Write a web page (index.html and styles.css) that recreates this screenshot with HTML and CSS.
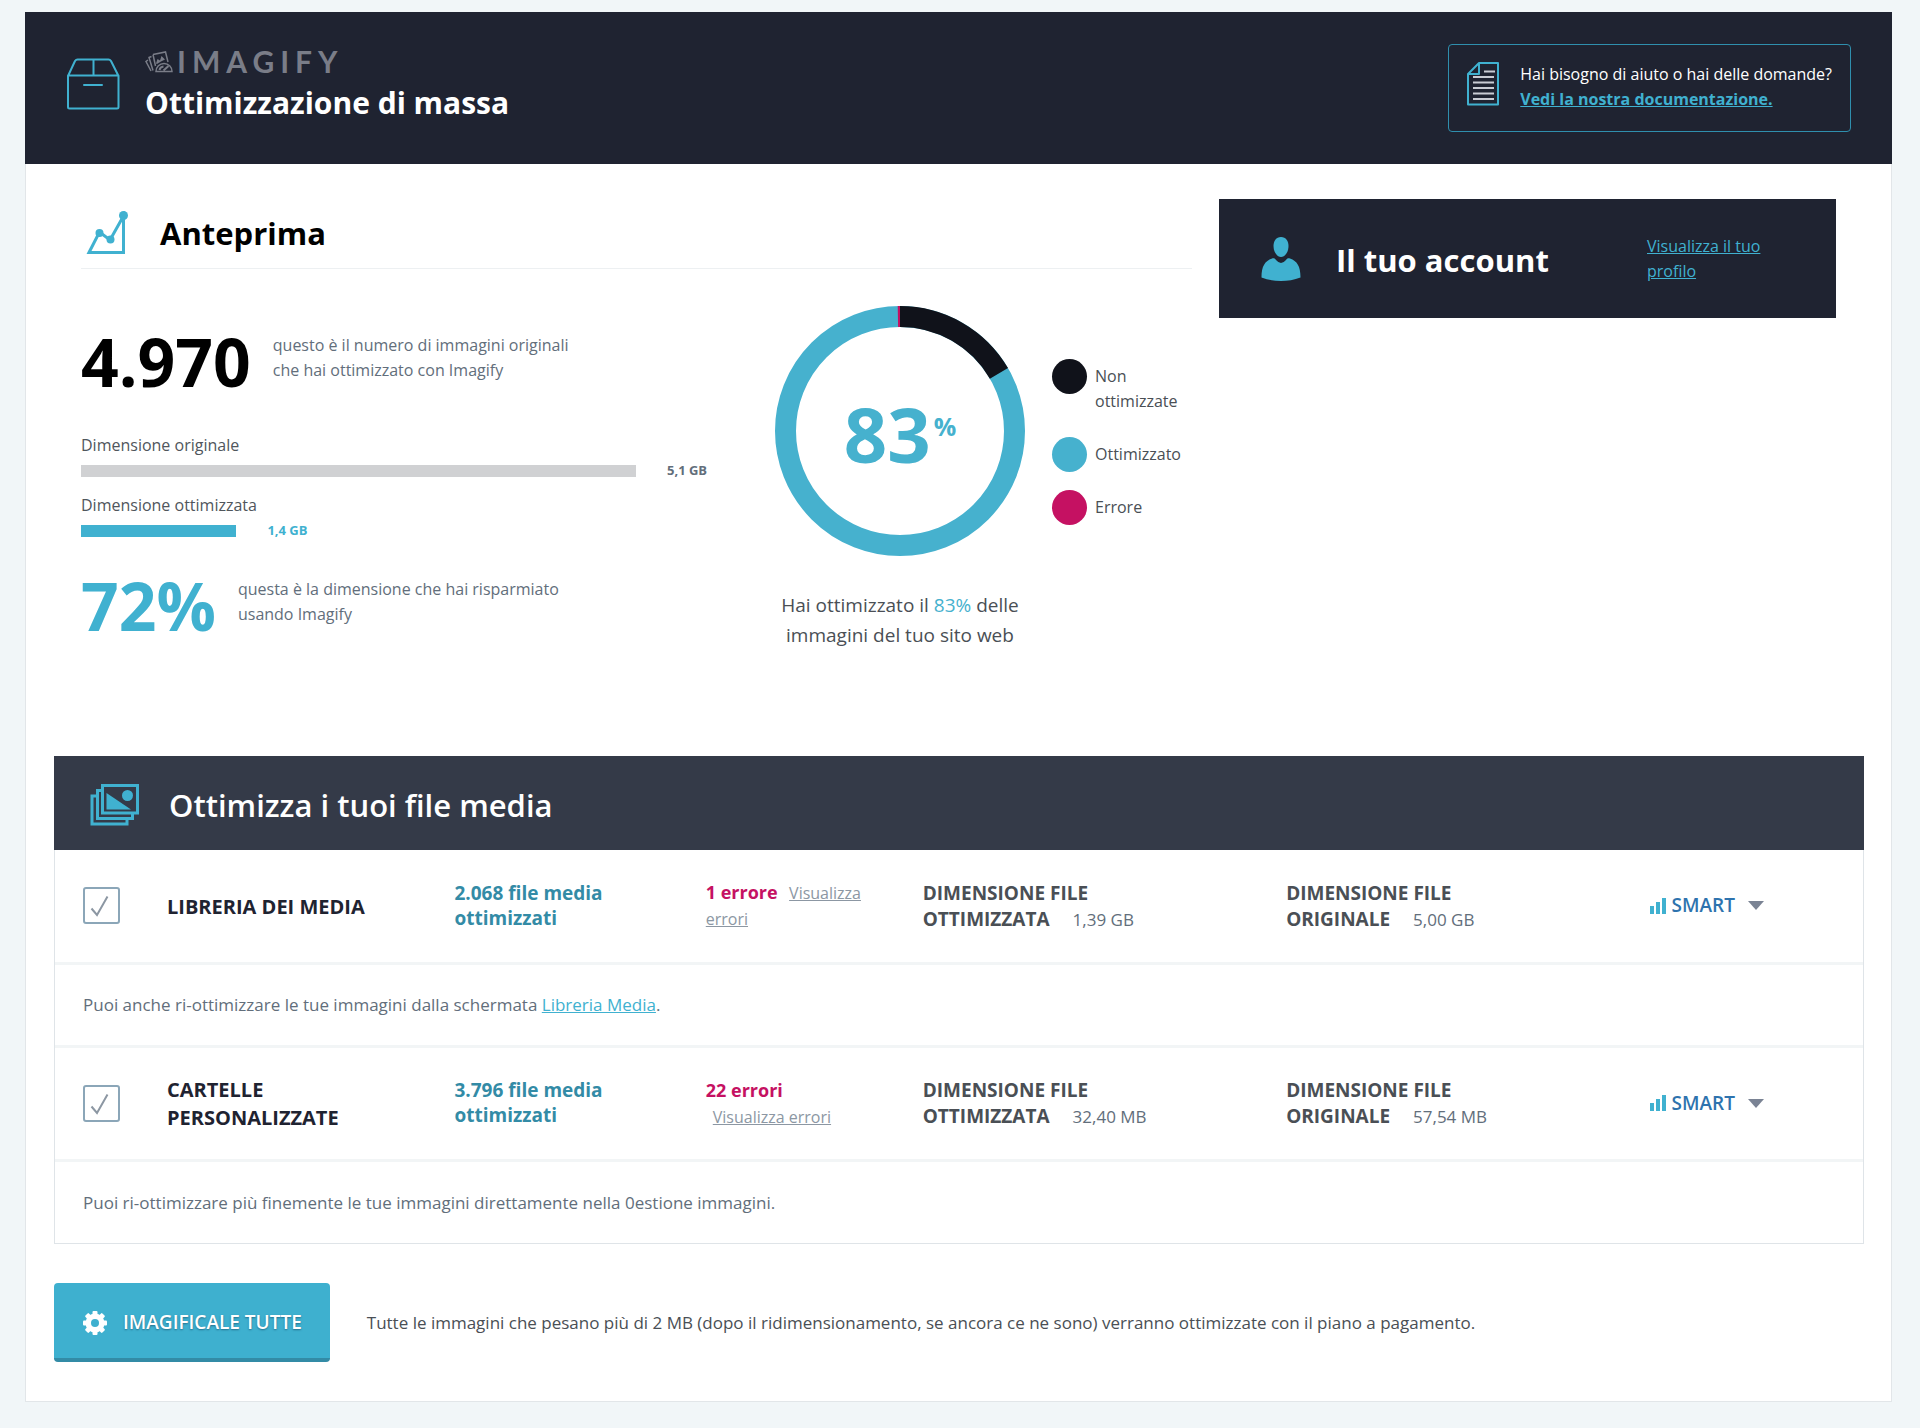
FILE: index.html
```html
<!DOCTYPE html>
<html lang="it">
<head>
<meta charset="utf-8">
<meta name="viewport" content="width=device-width, initial-scale=1">
<title>Imagify - Ottimizzazione di massa</title>
<link rel="stylesheet" href="styles.css">
</head>
<body>
<div class="page">
  <header class="top">
    <svg class="top-icon" width="54" height="52" viewBox="0 0 54 52" fill="none" stroke="#40b1d0" stroke-width="2" stroke-linejoin="round" stroke-linecap="round" aria-hidden="true">
      <path d="M2 18 L9 3 Q10 1.500 11.500 1.500 H42.500 Q44 1.500 45 3 L52.500 18 V49 Q52.500 50.500 51 50.500 H3.500 Q2 50.500 2 49 Z M2 17.500 H52.500 M27.500 2 V17 M18 27 H36"/>
    </svg>
    <div class="top-title">
      <div class="logo">
        <svg width="28" height="22" viewBox="0 0 28 22" fill="none" stroke="#7a7d88" aria-hidden="true">
          <path d="M8 3.500 L20.500 1 L23 11 M8 3.500 L10.500 15 M6.500 5.500 L4 6.500 L8 19.500 M3 9 L1 10.500 L6 20" stroke-width="1.500"/>
          <path d="M11 12.500 L12.500 8 L15 9.500 L16.500 5 L20 8.500 L16 10.500 L12 13 Z" fill="#7a7d88" stroke="none"/>
          <path d="M11 20.500 A8 8 0 0 1 27 20.500 Z" stroke-width="1.500"/>
          <path d="M14.500 19 A4.500 4.500 0 0 1 18.500 15.500 M18.500 19.500 L23.500 15" stroke-width="2"/>
        </svg>
        <span>IMAGIFY</span>
      </div>
      <h1>Ottimizzazione di massa</h1>
    </div>
    <aside class="help">
      <svg width="32" height="44" viewBox="0 0 32 44" fill="none" aria-hidden="true">
        <path d="M12 1 H31 V42.500 H1 V12 Z M12 1 V12 H1" stroke="#40b1d0" stroke-width="2" stroke-linejoin="round"/>
        <path d="M17 9.500 H28 M6 15 H27 M6 20.500 H27 M6 26 H27 M6 31.500 H27 M6 37 H27" stroke="#c9ccd4" stroke-width="2"/>
      </svg>
      <p>Hai bisogno di aiuto o hai delle domande?<br><a href="#documentazione">Vedi la nostra documentazione.</a></p>
    </aside>
  </header>

  <div class="summary">
    <section class="overview">
      <div class="overview-head">
        <svg width="44" height="44" viewBox="0 0 44 44" fill="none" stroke="#40b1d0" stroke-width="3" aria-hidden="true">
          <path d="M4 41.500 L14.500 21 L25 29 L38.500 5 V41.500 Z"/>
          <g fill="#40b1d0" stroke="none"><circle cx="38.500" cy="4.500" r="4.500"/><circle cx="14.500" cy="22" r="4"/><circle cx="25.500" cy="28.500" r="4"/></g>
        </svg>
        <h2>Anteprima</h2>
      </div>
      <div class="overview-body">
        <div class="numbers">
          <div class="figure">
            <strong>4.970</strong>
            <p>questo è il numero di immagini originali<br>che hai ottimizzato con Imagify</p>
          </div>
          <div class="sizes">
            <p>Dimensione originale</p>
            <div class="track"><div class="bar" style="width:100%"></div><b>5,1 GB</b></div>
            <p>Dimensione ottimizzata</p>
            <div class="track optimized"><div class="bar" style="width:28%"></div><b>1,4 GB</b></div>
          </div>
          <div class="figure saved">
            <strong>72%</strong>
            <p>questa è la dimensione che hai risparmiato<br>usando Imagify</p>
          </div>
        </div>
        <div class="chart">
          <div class="donut">
            <svg viewBox="0 0 250 250" fill="none" stroke-width="21" aria-hidden="true">
              <g transform="rotate(-90 125 125)">
                <circle cx="125" cy="125" r="114.500" stroke="#46b1ce"/>
                <circle cx="125" cy="125" r="114.500" stroke="#10121a" pathLength="1000" stroke-dasharray="166 834"/>
                <circle cx="125" cy="125" r="114.500" stroke="#c51162" pathLength="1000" stroke-dasharray="3 997" stroke-dashoffset="3"/>
              </g>
            </svg>
            <div class="donut-value">83<span>%</span></div>
          </div>
          <ul class="legend">
            <li><i class="dot dark"></i><span>Non ottimizzate</span></li>
            <li><i class="dot"></i><span>Ottimizzato</span></li>
            <li><i class="dot error"></i><span>Errore</span></li>
          </ul>
          <p class="caption">Hai ottimizzato il <span>83%</span> delle<br>immagini del tuo sito web</p>
        </div>
      </div>
    </section>
    <section class="account">
      <svg width="42" height="44" viewBox="0 0 42 44" fill="#40b1d0" aria-hidden="true">
        <path d="M21 0 C26 0 28.500 4 28.500 9 C28.500 15 25 20 21 20 C17 20 13.500 15 13.500 9 C13.500 4 16 0 21 0 Z"/>
        <path d="M12 21.500 C14 21 15 21.500 16 23 Q18.500 26 21 26 Q23.500 26 26 23 C27 21.500 28 21 30 21.500 C37 24 40.500 29 40.500 40.500 Q31 44 21 44 Q11 44 1.500 40.500 C1.500 29 5 24 12 21.500 Z"/>
      </svg>
      <h2>Il tuo account</h2>
      <a href="#profilo">Visualizza il tuo profilo</a>
    </section>
  </div>

  <section class="media">
    <div class="media-head">
      <svg width="50" height="42" viewBox="0 0 50 42" fill="none" stroke="#40b1d0" stroke-width="3" aria-hidden="true">
        <path d="M12.500 1.500 H47.500 V29 H12.500 Z M12 6.500 H7.500 V34.500 H42.500 V30 M7 12 H2 V40 H37 V35"/>
        <g fill="#40b1d0" stroke="none"><path d="M16.500 9 L41 25.500 H16.500 Z"/><circle cx="37.500" cy="11.500" r="5.500"/></g>
      </svg>
      <h2>Ottimizza i tuoi file media</h2>
    </div>
    <table>
      <colgroup><col class="c-check"><col class="c-name"><col class="c-count"><col class="c-errors"><col class="c-size"><col class="c-size"><col></colgroup>
      <tbody>
        <tr>
          <td><input type="checkbox" id="library" checked></td>
          <th scope="row"><label for="library">LIBRERIA DEI MEDIA</label></th>
          <td class="count">2.068 file media<br>ottimizzati</td>
          <td class="errors"><b>1 errore</b> <a href="#errori-libreria">Visualizza errori</a></td>
          <td class="size"><b>DIMENSIONE FILE<br>OTTIMIZZATA</b><span>1,39 GB</span></td>
          <td class="size"><b>DIMENSIONE FILE<br>ORIGINALE</b><span>5,00 GB</span></td>
          <td><div class="level">
            <svg width="16" height="16" viewBox="0 0 16 16" fill="#40b1d0" aria-hidden="true"><path d="M0 8 H4 V16 H0 Z M6 4 H10 V16 H6 Z M12 0 H16 V16 H12 Z"/></svg>
            <select aria-label="Livello"><option>SMART</option></select>
            <svg width="16" height="9" viewBox="0 0 16 9" fill="#7a8394" aria-hidden="true"><path d="M0 0 H16 L8 9 Z"/></svg>
          </div></td>
        </tr>
        <tr class="note"><td colspan="7">Puoi anche ri-ottimizzare le tue immagini dalla schermata <a href="#libreria">Libreria Media</a>.</td></tr>
        <tr>
          <td><input type="checkbox" id="folders" checked></td>
          <th scope="row"><label for="folders">CARTELLE<br>PERSONALIZZATE</label></th>
          <td class="count">3.796 file media<br>ottimizzati</td>
          <td class="errors"><b>22 errori</b><br><a class="indent" href="#errori-cartelle">Visualizza errori</a></td>
          <td class="size"><b>DIMENSIONE FILE<br>OTTIMIZZATA</b><span>32,40 MB</span></td>
          <td class="size"><b>DIMENSIONE FILE<br>ORIGINALE</b><span>57,54 MB</span></td>
          <td><div class="level">
            <svg width="16" height="16" viewBox="0 0 16 16" fill="#40b1d0" aria-hidden="true"><path d="M0 8 H4 V16 H0 Z M6 4 H10 V16 H6 Z M12 0 H16 V16 H12 Z"/></svg>
            <select aria-label="Livello"><option>SMART</option></select>
            <svg width="16" height="9" viewBox="0 0 16 9" fill="#7a8394" aria-hidden="true"><path d="M0 0 H16 L8 9 Z"/></svg>
          </div></td>
        </tr>
        <tr class="note"><td colspan="7">Puoi ri-ottimizzare più finemente le tue immagini direttamente nella 0estione immagini.</td></tr>
      </tbody>
    </table>
  </section>

  <footer class="actions">
    <button type="button">
      <svg width="26" height="26" viewBox="0 0 26 26" aria-hidden="true">
        <g fill="#fff"><circle cx="13" cy="13" r="9.500"/>
          <g id="teeth"><rect x="10.500" y="1" width="5" height="24" rx="1"/><rect x="1" y="10.500" width="24" height="5" rx="1"/></g>
          <use href="#teeth" transform="rotate(45 13 13)"/></g>
        <circle cx="13" cy="13" r="4" fill="#3eb0cf"/>
      </svg>
      IMAGIFICALE TUTTE
    </button>
    <p>Tutte le immagini che pesano più di 2 MB (dopo il ridimensionamento, se ancora ce ne sono) verranno ottimizzate con il piano a pagamento.</p>
  </footer>
</div>
</body>
</html>
```

FILE: styles.css
```css
* { box-sizing: border-box; }

body {
  margin: 0;
  padding: 12px 28px 27px 25px;
  background: #f1f6f8;
  color: #4a4f55;
  font: 16px/25px "Open Sans", "Noto Sans", sans-serif;
}

h1, h2, p, ul { margin: 0; padding: 0; font-weight: 700; }
p { font-weight: 400; }
svg { display: block; flex: none; }
a { color: #40b1d0; }

.page {
  background: #fff;
  border: 1px solid #e2e6e9;
  border-top: 0;
  padding-bottom: 39px;
}

/* Header */
.top {
  display: flex;
  align-items: flex-start;
  margin: 0 -1px;
  padding: 32px 41px 32px;
  background: #1f2331;
  color: #fff;
}
.top-icon { margin-top: 14px; }
.top-title { flex: 1; margin-left: 25px; }
.logo {
  display: flex;
  align-items: center;
  gap: 4px;
  height: 35px;
  color: #7a7d88;
  font: 700 30px/35px Lato, sans-serif;
  letter-spacing: 6px;
}
h1 { font-size: 30px; line-height: 47px; }
.help {
  display: flex;
  gap: 21px;
  padding: 17px 18px 19px;
  border: 1px solid #2f8fae;
  border-radius: 4px;
}
.help a { font-weight: 700; }

/* Overview and account */
.summary {
  display: grid;
  grid-template-columns: 1111fr 617fr;
  align-items: start;
  gap: 27px;
  padding: 35px 55px 0;
}
.overview-head {
  display: flex;
  align-items: center;
  gap: 31px;
  height: 70px;
  padding: 0 0 2px 4px;
  border-bottom: 1px solid #edf0f2;
}
h2 { font-size: 31px; line-height: 44px; }
.overview-head h2 { color: #000; }
.overview-body {
  display: grid;
  grid-template-columns: minmax(0, 640fr) auto;
  column-gap: 54px;
  padding-top: 37px;
}
.numbers { color: #626e7b; }
.figure { display: flex; align-items: flex-start; gap: 22px; padding-top: 21px; }
.figure strong {
  color: #000;
  font-size: 66px;
  line-height: 68px;
}
.figure p { padding-top: 6px; }
.figure.saved { padding-top: 18px; }
.figure.saved strong { color: #40b1d0; }
.sizes { padding: 38px 85px 0 0; color: #50565c; }
.track { display: flex; align-items: center; height: 25px; margin-bottom: 10px; }
.bar { flex: none; height: 12px; background: #d0d1d3; }
.track b { margin-left: 31px; color: #626e7b; font-size: 13px; white-space: nowrap; }
.optimized .bar { background: #40b1d0; }
.optimized b { color: #40b1d0; }

.chart {
  display: grid;
  grid-template-columns: 250px 140px;
  column-gap: 27px;
  row-gap: 34px;
  align-content: start;
}
.donut { display: grid; place-items: center; }
.donut > * { grid-area: 1 / 1; }
.donut svg { width: 100%; }
.donut-value {
  display: flex;
  align-items: flex-start;
  padding-top: 6px;
  color: #46b1ce;
  font-size: 76px;
  font-weight: 700;
  line-height: 80px;
}
.donut-value span { margin-left: 3px; font-size: 25px; line-height: 64px; }
.legend {
  display: flex;
  flex-direction: column;
  justify-content: center;
  gap: 18px;
  padding-top: 22px;
  list-style: none;
}
.legend li { display: flex; gap: 8px; font-weight: 400; }
.legend span { padding-top: 5px; padding-bottom: 5px; }
.dot { flex: none; width: 35px; height: 35px; border-radius: 50%; background: #46b1ce; }
.dot.dark { background: #10121a; }
.dot.error { background: #c51162; }
.caption { font-size: 19px; line-height: 30px; text-align: center; white-space: nowrap; }
.caption span { color: #46b1ce; }

.account {
  display: flex;
  align-items: center;
  height: 119px;
  padding: 0 50px 0 41px;
  background: #1f2331;
  color: #fff;
}
.account h2 { flex: 1; margin-left: 34px; padding-top: 3px; }
.account a { width: 139px; }

/* Media table */
.media { margin: 106px 27px 0 28px; border: 1px solid #dfe4e8; border-top: 0; }
.media-head {
  display: flex;
  align-items: center;
  gap: 29px;
  height: 94px;
  margin: 0 -1px;
  padding: 4px 36px 0;
  background: #343a48;
  color: #fff;
}
.media-head h2 { font-weight: 600; }
table { width: 100%; table-layout: fixed; border-collapse: collapse; font-size: 17px; }
.c-check { width: 112px; }
.c-name { width: 15.9%; }
.c-count { width: 13.9%; }
.c-errors { width: 12%; }
.c-size { width: 20.1%; }
tr { height: 114px; }
tr:first-child { height: 113px; }
tr + tr { border-top: 3px solid #f2f5f6; }
tr.note { height: 83px; color: #626e7b; }
td, th { padding: 0; text-align: left; }
td:first-child { padding-left: 28px; }
th { padding-top: 2px; color: #1f2331; font-size: 20px; line-height: 28px; }
.count { color: #338ba6; font-size: 19px; font-weight: 700; line-height: 25px; }
.errors { padding-right: 30px; line-height: 26px; }
.errors b { margin-right: 7px; color: #c51162; font-size: 18px; }
.errors a { color: #8c97a3; font-size: 16px; }
.errors .indent { margin-left: 7px; }
.size b { font-size: 19px; line-height: 26px; }
.size span { margin-left: 23px; color: #626e7b; }
input[type="checkbox"] {
  display: block;
  width: 37px;
  height: 37px;
  margin: 0;
  appearance: none;
  border: 2px solid #8ba6b8;
  border-radius: 3px;
  background: #fff;
}
input[type="checkbox"]:checked {
  background: #fff url("data:image/svg+xml,%3Csvg xmlns='http://www.w3.org/2000/svg' viewBox='0 0 33 33' fill='none' stroke='%238c97a3' stroke-width='2'%3E%3Cpath d='M6.500 19.500 L12 26 L22.500 7.500'/%3E%3C/svg%3E") center / 33px 33px no-repeat;
}
.level { display: flex; align-items: center; gap: 6px; }
.level select {
  appearance: none;
  padding: 0;
  margin-right: 6px;
  border: 0;
  background: none;
  color: #2e73ae;
  font: 600 19px/25px "Open Sans", sans-serif;
}

/* Actions */
.actions { display: flex; align-items: center; gap: 37px; padding: 39px 27px 0 28px; font-size: 17px; }
.actions button {
  display: flex;
  align-items: center;
  gap: 15px;
  height: 79px;
  padding: 4px 28px 0;
  border: 0;
  border-bottom: 4px solid #338ba6;
  border-radius: 4px;
  background: #3eb0cf;
  color: #fff;
  font: 600 19px/25px "Open Sans", sans-serif;
  text-shadow: 0 1px 2px #246f8c;
  white-space: nowrap;
}
```
